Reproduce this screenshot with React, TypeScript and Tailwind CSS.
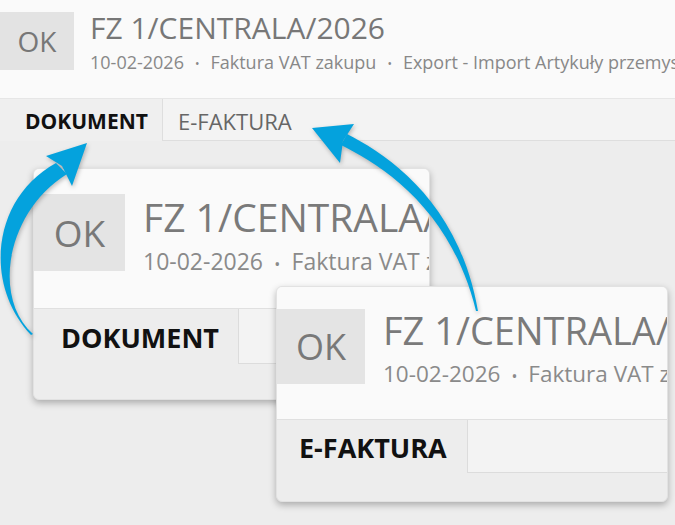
import React from 'react'

type CardProps = {
  label: string
  className: string
  okBox: string
  okText: string
  titleBox: string
  title: string
  sub: string
  tab: string
  tabText: string
}

function Card({ label, className, okBox, okText, titleBox, title, sub, tab, tabText }: CardProps) {
  return (
    <div
      className={`absolute flex flex-col overflow-hidden rounded-[6px] border border-[#e2e2e2] bg-[#ededed] shadow-[0_3px_7px_rgba(0,0,0,0.28)] ${className}`}
    >
      {/* header */}
      <div className="flex shrink-0 items-start border-b border-[#e0e0e0] bg-[#fafafa]">
        <div className={`flex shrink-0 items-center justify-center bg-[#e4e4e4] text-[#787878] ${okBox} ${okText}`}>
          OK
        </div>
        <div className={`whitespace-nowrap ${titleBox}`}>
          <div className={`text-[#7a7a7a] ${title}`}>FZ 1/CENTRALA/2026</div>
          <div className={`text-[#8a8a8a] ${sub}`}>
            10-02-2026
            <span className="mx-[0.7em] text-[0.7em] align-middle">•</span>
            Faktura VAT zakupu
          </div>
        </div>
      </div>

      {/* tabs */}
      <div className="flex shrink-0">
        <div className={`flex items-center border-r border-[#dcdcdc] bg-[#ededed] font-bold text-[#111] ${tab} ${tabText}`}>
          {label}
        </div>
        <div className="flex-1 border-b border-[#dcdcdc] bg-[#f3f3f3]" />
      </div>
    </div>
  )
}

function Arrows() {
  return (
    <svg
      className="pointer-events-none absolute left-0 top-0 drop-shadow-[1px_2px_2px_rgba(0,0,0,0.25)]"
      width="675"
      height="525"
      viewBox="0 0 675 525"
    >
      {/* left arrow -> DOKUMENT */}
      <path
        d="M31,335 C-16,285 -9,199 56,163 L67,174 C6,212 -8,298 33,334 Z"
        fill="#04a2dd"
      />
      <polygon points="87,143 46,156 62,166 72,186" fill="#04a2dd" />

      {/* right arrow -> E-FAKTURA */}
      <path
        d="M347,134 C388,155 459,202 478,311 L476,311 C451,208 381,165 341,145 Z"
        fill="#04a2dd"
      />
      <polygon points="312,128 354,124 343,141 340,163" fill="#04a2dd" />
    </svg>
  )
}

export default function App() {
  return (
    <div className="relative flex h-[525px] w-[675px] flex-col overflow-hidden bg-[#ededed] font-['Open_Sans',sans-serif]">
      {/* Document header */}
      <div className="flex h-[98px] shrink-0 items-start bg-[#fafafa] pt-[12px]">
        <div className="flex h-[58px] w-[74px] shrink-0 items-center justify-center bg-[#e3e3e3] text-[28px] text-[#777]">
          OK
        </div>
        <div className="ml-[16px] whitespace-nowrap pt-[1px]">
          <div className="text-[30px] leading-[30px] text-[#777]">FZ 1/CENTRALA/2026</div>
          <div className="mt-[7px] text-[18px] leading-[24px] text-[#888]">
            10-02-2026
            <span className="mx-[11px] text-[12px] align-middle">•</span>
            Faktura VAT zakupu
            <span className="mx-[11px] text-[12px] align-middle">•</span>
            Export - Import Artykuły przemysłowe
          </div>
        </div>
      </div>

      {/* Tab bar */}
      <div className="flex h-[43px] shrink-0 border-t border-[#e6e6e6]">
        <div className="flex w-[163px] items-center border-r border-[#dedede] bg-[#efefef] pl-[25px] pt-[3px] text-[21px] font-bold text-[#111]">
          DOKUMENT
        </div>
        <div className="flex flex-1 items-center border-b border-[#dedede] bg-[#f3f3f3] pl-[15px] pt-[3px] text-[22px] text-[#666]">
          E-FAKTURA
        </div>
      </div>

      {/* Canvas */}
      <div className="relative flex-1" />

      <Card
        label="DOKUMENT"
        className="left-[33px] top-[168px] h-[232px] w-[397px]"
        okBox="mt-[25px] mb-[37px] h-[77px] w-[91px]"
        okText="text-[37px]"
        titleBox="ml-[18px] pt-[28px]"
        title="text-[39px] leading-[39px]"
        sub="mt-[10px] text-[23px] leading-[30px]"
        tab="h-[55px] w-[205px] pl-[27px] pt-[4px]"
        tabText="text-[27px]"
      />
      <Card
        label="E-FAKTURA"
        className="left-[276px] top-[286px] h-[216px] w-[392px]"
        okBox="mt-[22px] mb-[35px] h-[75px] w-[88px]"
        okText="text-[36px]"
        titleBox="ml-[18px] pt-[24px]"
        title="text-[38px] leading-[38px]"
        sub="mt-[10px] text-[22.5px] leading-[30px]"
        tab="h-[53px] w-[191px] pl-[22px] pt-[4px]"
        tabText="text-[27px]"
      />

      <Arrows />
    </div>
  )
}
